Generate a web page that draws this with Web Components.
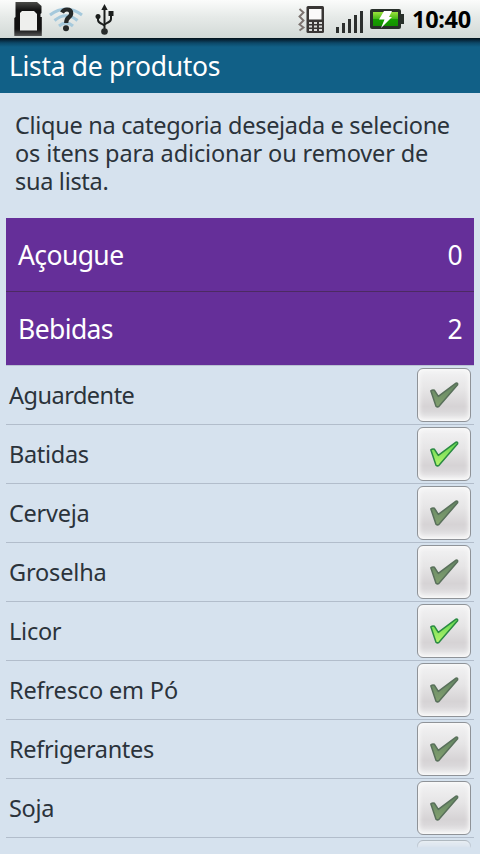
<!DOCTYPE html>
<html lang="pt-BR">
<head>
<meta charset="utf-8">
<title>Lista de produtos</title>
<style>
html,body{margin:0;height:100%;overflow:hidden;background:#d6e2ee}
body{font-family:"Noto Sans","Open Sans",sans-serif;color:#2b333b}
</style>
</head>
<body>
<shopping-app></shopping-app>
<script>
class BaseElement extends HTMLElement {
  connectedCallback() {
    if (this.shadowRoot) return;
    this.attachShadow({ mode: 'open' }).innerHTML = this.view();
  }
}

customElements.define('status-bar', class extends BaseElement {
  view() {
    return `<style>
:host{display:block;height:38px;background:linear-gradient(#fbfcfb,#e6eae8 45%,#d2d9d6)}
.bar{display:flex;height:38px}
svg{display:block;flex:none}
.time{font:700 23.5px/38px "Noto Sans",sans-serif;color:#000;letter-spacing:-.3px;margin-left:8px;white-space:nowrap}
</style>
<div class="bar">
<svg width="404" height="38" viewBox="0 0 404 38">
 <defs>
  <linearGradient id="g" x2="0" y2="1"><stop stop-color="#9be23c"/><stop offset=".48" stop-color="#46b818"/><stop offset=".52" stop-color="#16a000"/><stop offset="1" stop-color="#149000"/></linearGradient>
  <linearGradient id="k" x2="0" y2="1"><stop stop-color="#4a4b48"/><stop offset=".25" stop-color="#111"/><stop offset=".8" stop-color="#111"/><stop offset="1" stop-color="#555"/></linearGradient>
 </defs>
 <path d="M15.500 2H37l4.500 4v7l-1 1v3h1.300v19H14.300V18l1.200-1z" fill="url(#k)"/>
 <path d="M22 11h12l3 3v16.500H20V13z" fill="#eeefed"/>
 <g fill="none" stroke="#a5c9dc" stroke-width="3"><path d="M50 15q16-12 32 0"/><path d="M54.500 20.500q11.500-9.500 23 0"/><path d="M59 26q7-6 14 0"/></g>
 <path d="M62 12.500q1.500-3 5-3 4.200 0 4.200 3.700 0 2.300-2.600 4.300-2.400 1.800-2.400 5.500" fill="none" stroke="#252929" stroke-width="4.200"/>
 <circle cx="66" cy="28.300" r="3" fill="#252929"/>
 <g fill="none" stroke="#1b1e1d" stroke-width="2"><path d="M104.500 8v23"/><path d="M98 17v3q0 2 3 3.500l3.500 2"/><path d="M111 14v5q0 2-3 3.500l-3.500 2"/></g>
 <path d="M104.500 4l3.200 6h-6.400z" fill="#1b1e1d"/><circle cx="98" cy="16.500" r="2.500" fill="#1b1e1d"/><path d="M108.500 11h5v5h-5z" fill="#1b1e1d"/><circle cx="104.500" cy="31.500" r="3.300" fill="#292c2b"/>
 <path d="M299.500 9l4 3.500-4 4 4 4-4 4 4 3-4 3" fill="none" stroke="#7c7370" stroke-width="1.900"/>
 <rect x="306.500" y="6" width="17.500" height="27" rx="1.500" fill="#393635"/>
 <path d="M309 9h12.500v10.500H309z" fill="#fafafa"/>
 <g fill="#d9dad8"><path d="M309 22h3v2h-3zM314 22h3v2h-3zM319 22h3v2h-3zM309 25.500h3v2h-3zM314 25.500h3v2h-3zM319 25.500h3v2h-3zM309 29h3v2h-3zM314 29h3v2h-3zM319 29h3v2h-3z"/></g>
 <g fill="#2c2f2e"><path d="M336 27h3v6h-3zM342 23h3v10h-3zM348 19h3v14h-3zM354 15h3v18h-3zM360 11h3v22h-3z"/></g>
 <rect x="370" y="9" width="31" height="20" rx="2" fill="#28302a"/><path d="M400 14h4v10h-4z" fill="#28302a"/>
 <rect x="373" y="12" width="25" height="14" fill="url(#g)"/>
 <path d="M384 11h8l-3 6h3L381 28l3.500-8.500H379z" fill="#fff"/>
</svg><span class="time"><slot></slot></span></div>`;
  }
});

customElements.define('title-bar', class extends BaseElement {
  view() {
    return `<style>
:host{display:block;box-sizing:border-box;height:55px;padding:9px 9px 0;background:linear-gradient(#021018,#07263a 2px,#0c4868 5px,#116087 9px);color:#fff;font-size:26.500px;line-height:38px;white-space:nowrap;letter-spacing:-.32px}
</style><slot></slot>`;
  }
});

customElements.define('intro-text', class extends BaseElement {
  view() {
    return `<style>
:host{display:block;box-sizing:border-box;height:125px;padding:18px 0 0 15px;font-size:23.500px;line-height:28px;white-space:nowrap;letter-spacing:-.3px}
</style><slot></slot>`;
  }
});

customElements.define('category-row', class extends BaseElement {
  view() {
    return `<style>
:host{display:flex;justify-content:space-between;box-sizing:border-box;height:74px;padding:0 12px;background:#652f99;background-clip:padding-box;border-bottom:1px solid #4c2a62;color:#fff;font-size:26.500px;line-height:74px;letter-spacing:-.6px}
:host([open]){border-bottom-color:#b9c2d2}
</style><slot></slot><span>${this.getAttribute('count')}</span>`;
  }
});

customElements.define('check-button', class extends BaseElement {
  view() {
    const on = this.hasAttribute('checked');
    return `<style>
:host{display:block;box-sizing:border-box;width:54px;height:54px;border:1px solid #8f9398;border-radius:6px;background:linear-gradient(#f3f3f4,#e6e5e6 40%,#d6d3d5 72%,#dad8da 82%,#f0f0f1);box-shadow:inset 0 0 4px 1.500px #fafafa}
svg{display:block}
</style><svg width="52" height="52" viewBox="0 0 52 52">
<defs><linearGradient id="c" x2="0" y2="1"><stop stop-color="${on ? '#62d650' : '#648663'}"/><stop offset="1" stop-color="${on ? '#b4f46c' : '#82a06f'}"/></linearGradient></defs>
<path d="M12.800 21.800Q14.500 20.600 16.500 21.300L20.300 27.400 38 14.200Q40 13.700 39.600 15.800L21 37.300Q19.500 38.500 18 37.200z" fill="url(#c)" stroke="${on ? '#2a8a42' : '#59705b'}" stroke-width="1.500" stroke-linejoin="round"/></svg>`;
  }
});

customElements.define('product-row', class extends BaseElement {
  view() {
    return `<style>
:host{display:flex;justify-content:space-between;box-sizing:border-box;height:59px;padding:2px 3px;border-bottom:1px solid #b2bdcb;font-size:23.500px}
.name{line-height:54px;white-space:nowrap;letter-spacing:${this.getAttribute('tracking') || '-.3'}px}
</style><span class="name"><slot></slot></span><check-button ${this.hasAttribute('checked') ? 'checked' : ''}></check-button>`;
  }
});

customElements.define('shopping-app', class extends BaseElement {
  view() {
    const items = [['Aguardente', 0, -.5], ['Batidas', 1, -.3], ['Cerveja', 0, -.25], ['Groselha', 0, -.15], ['Licor', 1, -.25], ['Refresco em Pó', 0, -.15], ['Refrigerantes', 0, -.35], ['Soja', 0, -.35]];
    return `<style>
:host{display:block;width:480px;height:854px;overflow:hidden;background:#d6e2ee}
.wide{letter-spacing:-.13px}
main{height:630px;margin:0 6px;overflow:hidden}
.next{display:flex;justify-content:flex-end;height:10px;padding:2px 3px 0;box-sizing:border-box;overflow:hidden;-webkit-mask-image:linear-gradient(#000a,#0004 8px,transparent);mask-image:linear-gradient(#000a,#0004 8px,transparent)}
</style>
<status-bar>10:40</status-bar>
<title-bar>Lista de produtos</title-bar>
<intro-text>Clique na categoria desejada e selecione<br><span class="wide">os itens para adicionar ou remover de</span><br>sua lista.</intro-text>
<main>
<category-row count="0">Açougue</category-row>
<category-row count="2" open>Bebidas</category-row>
${items.map(([n, c, t]) => `<product-row tracking="${t}" ${c ? 'checked' : ''}>${n}</product-row>`).join('')}
<div class="next"><check-button></check-button></div>
</main>`;
  }
});
</script>
</body>
</html>
